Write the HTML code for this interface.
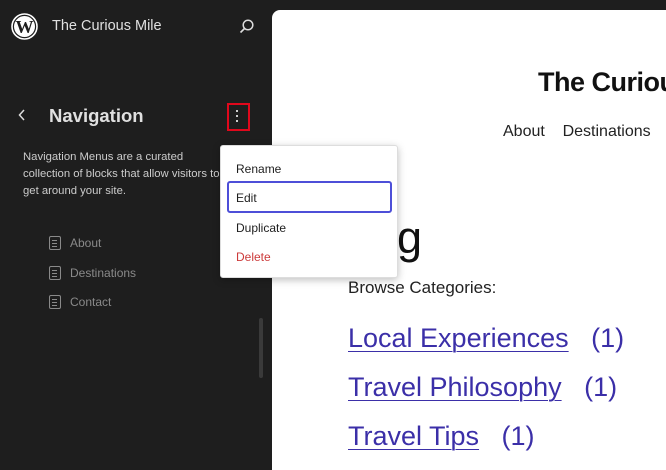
<!DOCTYPE html>
<html><head><style>
*{margin:0;padding:0;box-sizing:border-box}
body{width:666px;height:460px;overflow:hidden;background:#1e1e1e;font-family:"Liberation Sans",sans-serif;position:relative}
.a{position:absolute}
.canvas{left:272px;top:10px;width:400px;height:460px;background:#fff;border-radius:8px 0 0 0;overflow:hidden}
.nav{color:#8a8a8a;font-size:12px}
.cat{color:#3b2fa8;font-size:27px;text-decoration:underline;text-decoration-thickness:1px;text-underline-offset:4px;white-space:nowrap}
.cnt{color:#3b2fa8;font-size:27px}
.menu{left:220px;top:145px;width:178px;height:133px;background:#fff;border-radius:3px;box-shadow:0 2px 8px rgba(0,0,0,.25);border:1px solid #ddd}
.mi{position:absolute;left:15px;font-size:12px;color:#1e1e1e}
.ic{display:inline-block;width:12px;height:14px;border:1.5px solid #8a8a8a;border-radius:2px;vertical-align:-3px;margin-right:9px;background:linear-gradient(#8a8a8a,#8a8a8a) 2px 3px/5px 1px no-repeat,linear-gradient(#8a8a8a,#8a8a8a) 2px 6px/5px 1px no-repeat,linear-gradient(#8a8a8a,#8a8a8a) 2px 9px/5px 1px no-repeat}
</style></head><body>
<svg class="a" style="left:11px;top:13px" width="27" height="27" viewBox="0 0 27 27"><circle cx="13.5" cy="13.5" r="12.5" fill="none" stroke="#fff" stroke-width="1.6"/><circle cx="13.5" cy="13.5" r="10.5" fill="#fff"/><text x="13.5" y="20" text-anchor="middle" font-family="Liberation Serif" font-size="18" font-weight="bold" fill="#1e1e1e">W</text></svg>
<div class="a" style="left:52px;top:18px;color:#e0e0e0;font-size:14.5px">The Curious Mile</div>
<svg class="a" style="left:239px;top:18px" width="16" height="16" viewBox="0 0 16 16"><circle cx="9" cy="7" r="4.8" fill="none" stroke="#ddd" stroke-width="1.5"/><line x1="5.5" y1="10.5" x2="1.5" y2="14.5" stroke="#ddd" stroke-width="1.6"/></svg>
<svg class="a" style="left:17px;top:108px" width="10" height="14"><path d="M7 2 L2.5 7 L7 12" fill="none" stroke="#ddd" stroke-width="1.5"/></svg>
<div class="a" style="left:49px;top:105px;color:#e0e0e0;font-size:18.5px;font-weight:bold">Navigation</div>
<div class="a" style="left:227px;top:103px;width:23px;height:28px;border:2px solid #e0081c"></div>
<div class="a" style="left:236px;top:110px;width:2px;height:2px;background:#ccc;box-shadow:0 5px 0 #ccc,0 10px 0 #ccc"></div>
<div class="a" style="left:23px;top:149px;width:200px;color:#ccc;font-size:11.3px;line-height:17px">Navigation Menus are a curated<br>collection of blocks that allow visitors to<br>get around your site.</div>
<div class="a nav" style="left:49px;top:236px">
<div style="height:29.5px"><span class="ic"></span>About</div>
<div style="height:29.5px"><span class="ic"></span>Destinations</div>
<div><span class="ic"></span>Contact</div>
</div>
<div class="a" style="left:259px;top:318px;width:4px;height:60px;background:#3a3a3a;border-radius:2px"></div>
<div class="a canvas">
<div class="a" style="left:266px;top:57px;font-size:27px;font-weight:bold;color:#111;white-space:nowrap;letter-spacing:-0.5px">The Curious Mile</div>
<div class="a" style="left:231px;top:113px;font-size:16px;color:#222;white-space:nowrap">About&nbsp;&nbsp;&nbsp;&nbsp;Destinations</div>
<div class="a" style="left:60px;top:202px;font-size:45px;color:#111">Blog</div>
<div class="a" style="left:76px;top:268px;font-size:17px;color:#222">Browse Categories:</div>
<div class="a" style="left:76px;top:313px"><span class="cat">Local Experiences</span><span class="cnt">&nbsp;&nbsp; (1)</span></div>
<div class="a" style="left:76px;top:362px"><span class="cat">Travel Philosophy</span><span class="cnt">&nbsp;&nbsp; (1)</span></div>
<div class="a" style="left:76px;top:411px"><span class="cat">Travel Tips</span><span class="cnt">&nbsp;&nbsp; (1)</span></div>
</div>
<div class="a menu">
<div class="mi" style="top:16px">Rename</div>
<div class="a" style="left:6px;top:35px;width:165px;height:32px;border:2px solid #4d4fd8;border-radius:3px"></div>
<div class="mi" style="top:45px">Edit</div>
<div class="mi" style="top:75px">Duplicate</div>
<div class="mi" style="top:104px;color:#cc3a3a">Delete</div>
</div>
</body></html>
